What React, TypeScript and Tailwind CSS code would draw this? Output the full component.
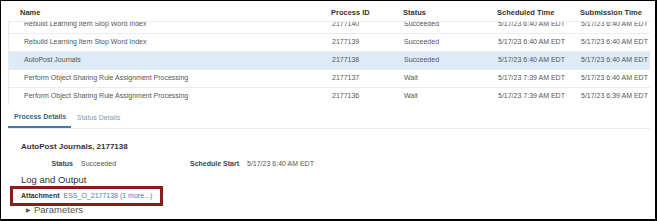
const rows = [
  { name: "Rebuild Learning Item Stop Word Index", id: "2177140", status: "Succeeded", sched: "5/17/23 6:40 AM EDT", sub: "5/17/23 6:40 AM EDT" },
  { name: "Rebuild Learning Item Stop Word Index", id: "2177139", status: "Succeeded", sched: "5/17/23 6:40 AM EDT", sub: "5/17/23 6:40 AM EDT" },
  { name: "AutoPost Journals", id: "2177138", status: "Succeeded", sched: "5/17/23 6:40 AM EDT", sub: "5/17/23 6:40 AM EDT", selected: true },
  { name: "Perform Object Sharing Rule Assignment Processing", id: "2177137", status: "Wait", sched: "5/17/23 7:39 AM EDT", sub: "5/17/23 6:40 AM EDT" },
  { name: "Perform Object Sharing Rule Assignment Processing", id: "2177136", status: "Wait", sched: "5/17/23 7:39 AM EDT", sub: "5/17/23 6:39 AM EDT" },
];

const cols = "grid grid-cols-[317px_72px_94px_83px_76px]";

export default function App() {
  return (
    <div
      className="w-[657px] h-[221px] overflow-hidden bg-white border-l border-t border-r-2 border-b-2 border-black text-[#555]"
      style={{ fontFamily: '"Liberation Sans", Arial, sans-serif' }}
    >
      {/* Results table */}
      <div className="ml-[7px] w-[642px]">
        <div className={`${cols} h-[21px] pt-[3px] items-center border-b border-[#ececec] text-[7.5px] font-bold text-[#333] whitespace-nowrap`}>
          <div className="pl-[12px]">Name</div>
          <div className="pl-[6px]">Process ID</div>
          <div className="pl-[6px]">Status</div>
          <div className="pl-[6px]">Scheduled Time</div>
          <div className="pl-[6px]">Submission Time</div>
        </div>
        <div className="h-[83px] overflow-hidden border-l border-[#eaeaea]">
          {rows.map((r, i) => (
            <div
              key={r.id}
              className={`${cols} h-[18px] items-center border-b border-[#ececec] text-[7px] whitespace-nowrap ${
                r.selected ? "bg-[#dcebf7]" : ""
              } ${i === 0 ? "-mt-[6px]" : ""}`}
            >
              <div className="pl-[15px]">{r.name}</div>
              <div className="pl-[6px]">{r.id}</div>
              <div className="pl-[6px]">{r.status}</div>
              <div className="pl-[6px]">{r.sched}</div>
              <div className="pl-[6px]">{r.sub}</div>
            </div>
          ))}
        </div>
      </div>

      {/* Tabs */}
      <div className="mt-[4px] ml-[7px] w-[642px] flex h-[20px] items-end border-b border-[#ececec] text-[7px] whitespace-nowrap">
        <div className="w-[63px] h-full flex items-center pl-[6px] font-bold text-[#2d6a8f] border-b-2 border-[#3a7db3]">
          Process Details
        </div>
        <div className="h-full flex items-center pl-[6px] text-[#7f9db5]">Status Details</div>
      </div>

      {/* Details */}
      <div className="pl-[20px] pt-[13px]">
        <div className="text-[8px] font-bold text-[#333] leading-[10px]">AutoPost Journals, 2177138</div>
        <div className="flex items-center mt-[7px] h-[10px] text-[7px] whitespace-nowrap">
          <div className="w-[52px] text-right font-bold text-[#444]">Status</div>
          <div className="ml-[8px] w-[102px]">Succeeded</div>
          <div className="w-[56px] text-right font-bold text-[#444]">Schedule Start</div>
          <div className="ml-[8px]">5/17/23 6:40 AM EDT</div>
        </div>
        <div className="mt-[5px] text-[9.5px] leading-[12px] text-[#333]">Log and Output</div>
      </div>
      <div className="ml-[9px] w-[153px] h-[20px] border-[3px] border-[#8a1c1c] flex items-center pl-[8px] text-[7px] whitespace-nowrap">
        <span className="font-bold text-[#333]">Attachment</span>
        <span className="ml-[4px] text-[#3d82b8]">ESS_O_2177138 (1 more...)</span>
      </div>
      <div className="flex items-center pl-[25px] -mt-[1px] h-[10px] text-[9.5px] text-[#555]">
        <span className="text-[6px] mr-[3px]">▶</span>
        <span>Parameters</span>
      </div>
    </div>
  );
}
